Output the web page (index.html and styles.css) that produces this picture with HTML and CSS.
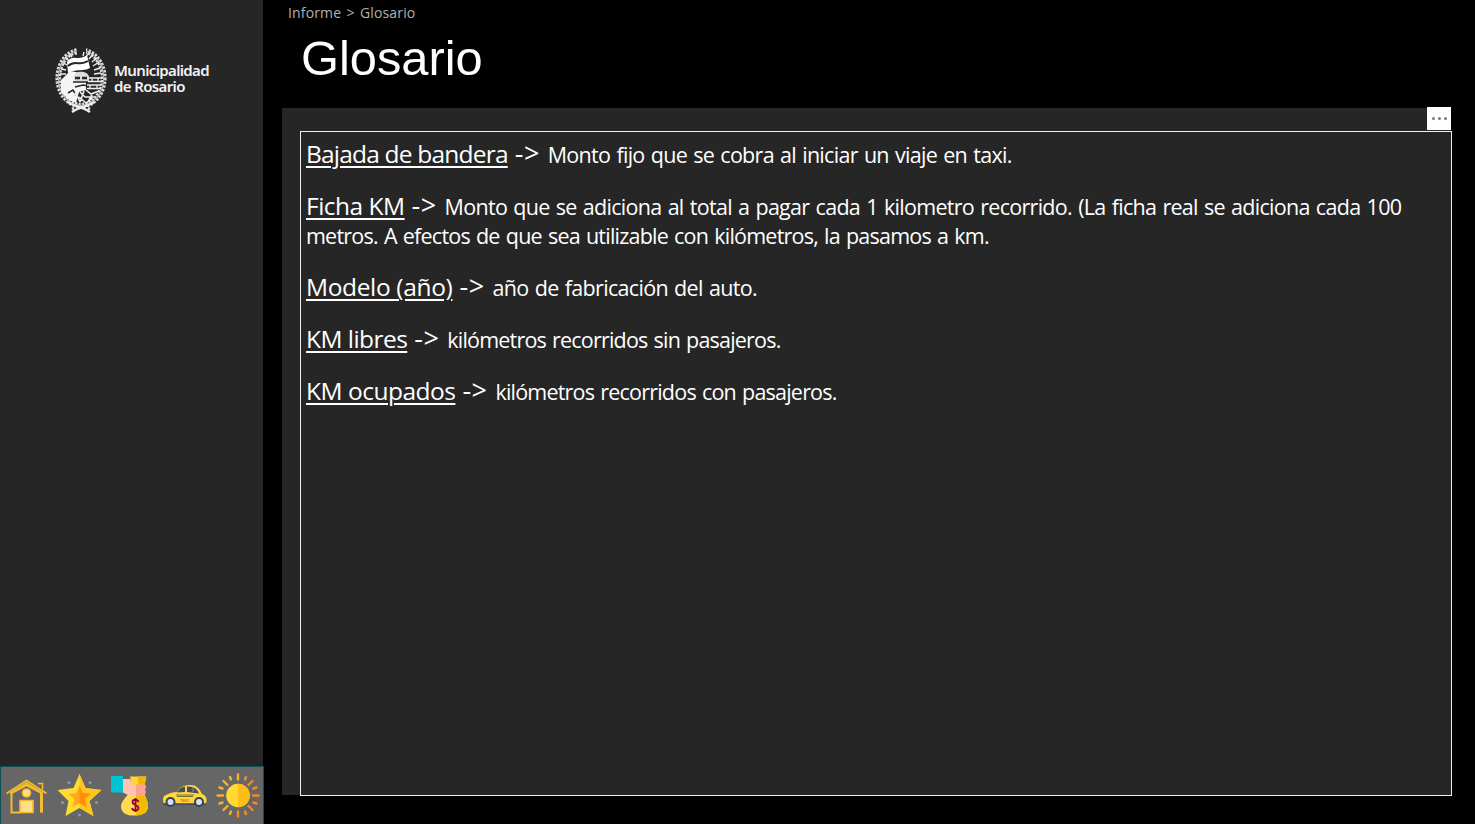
FILE: index.html
```
<!DOCTYPE html>
<html lang="es">
<head>
<meta charset="utf-8">
<title>Glosario</title>
<link rel="stylesheet" href="styles.css">
</head>
<body>
<div class="page">
  <aside class="sidebar">
    <div class="brand">
      <svg class="crest" viewBox="0 0 52 68" fill="none" stroke="#eee">
        <ellipse cx="26" cy="31" rx="24.300" ry="29" stroke="#ddd" stroke-width="2.600" stroke-dasharray="2.400 1.300"/>
        <ellipse cx="26" cy="31" rx="21" ry="26" stroke="#ddd" stroke-width="2.400" stroke-dasharray="2.400 1.100" stroke-dashoffset="1.500"/>
        <ellipse cx="26" cy="31" rx="22.700" ry="27.500" stroke="#bbb" stroke-width="1.200"/>
        <path d="M22 0h9v7h-9z" fill="#262626" stroke="none"/>
        <path d="M21 8v-2M28 9l1-4M31 10l3-5M34 12l4-5M37 15l5-4M38 19l6-4M39 23l6-2M39 27l7-1M14 14l-4-4M17 10l-2-3M12 18l-5-3M11 23l-5-1M11 27H5" stroke-width="1.400"/>
        <path d="M12 15c6-9 11 0 20-7l3 13c-8 4-11 0-22 5z" fill="#fff" stroke="none"/>
        <path d="M13 19c8-7 11 1 20-5" stroke="#262626" stroke-width="2"/>
        <path d="M15 24 6 33v12l8 8 7 3 3-11 7-2V29l-5-3z" fill="#f5f5f5" stroke="none"/>
        <path d="M19 30c0-7 14-7 15 0v5H19z" fill="#ddd" stroke="none"/>
        <path d="M20 31h5m2 0h5" stroke="#262626" stroke-width="2.400"/>
        <path d="M18 35h15M20 40l8-2 5 1M13 46l5-3 3 5" stroke="#262626" stroke-width="1.500"/>
        <path d="M33 31h14M33 34.500h14M32 38h14M32 41.500h14M37 31v4m6-4v4m-8 3v3m7-3v3" stroke-width="1.300"/>
        <path d="M31 43l5 4 8-3M25 45l5 5 9 0M24 50l7 6 6-5M15 52l6-6 4 9M29 44l-4 11M38 46l-5 9" stroke-width="1.600"/>
        <path d="M13 55c4 4 14 4 22 10M39 55c-4 4-14 4-22 10M19 61l-2 1m16-1 2 1" stroke-width="2.400"/>
      </svg>
      <div class="brand-name"><span>Municipalidad</span><span>de Rosario</span></div>
    </div>
    <nav class="toolbar">
      <svg class="icon" viewBox="0 0 44 48" fill="none" stroke="#f4bc2e" stroke-width="1.600">
        <path d="M15 41.500H6.500V22L21.500 14 36.500 22V41.500" stroke-width="2"/>
        <path d="M36.500 22v19.500" stroke-width="3"/>
        <path d="M1.500 22.500 21.500 9.500l20 13M5 22.500l16.500-10.500L38 22.500M33 12.500h4.500v6" stroke-width="1.500"/>
        <circle cx="21.500" cy="22" r="4" fill="#fce08a"/>
        <path d="M15 29.500h13v12H15z" fill="#fce08a"/>
      </svg>
      <svg class="icon" viewBox="0 0 44 48">
        <path d="m21.500 3 6 14 16 2-12 11 4 15-14-8-14 8 3-15L-.5 19l16-2z" fill="#ffdc32"/>
        <path d="m21.500 3 6 14 16 2-12 11 4 15-14-8z" fill="#ffc51f"/>
        <path d="m21.500 15 3 7 8 1-6 5 2 8-7-4-7 4 2-8-6-5 8-1z" fill="#ffa51e"/>
        <path d="m21.500 15 3 7 8 1-6 5 2 8-7-4z" fill="#ff8c0b"/>
        <g fill="#8b8fdd"><circle cx="11" cy="11.500" r="1.500"/><circle cx="32" cy="11.500" r="1.500"/><circle cx="4.500" cy="31.500" r="1.500"/><circle cx="38.500" cy="31.500" r="1.500"/><circle cx="21.500" cy="44" r="1.500"/></g>
      </svg>
      <svg class="icon" viewBox="0 0 44 48">
        <path d="M20 5.500h16c1 0-1 7-2 10l-12 2z" fill="#ffd33b"/><path d="M28 5.500h8c1 0-2 9-2 11h-6z" fill="#f0b900"/>
        <path d="M21 19h11c5 9 6 12 6 16 0 7-5 9-12 9.500s-15-1-15-9.500c0-5 6-9 10-16z" fill="#ffdc4f"/>
        <path d="M26 19h6c5 9 6 12 6 16 0 7-5 9-12 9.500z" fill="#f0bd00"/>
        <path d="M12 8h8l2 6h13v10H18l-6-3z" fill="#ffc2b3"/><path d="M26 13.500h9q2 2 0 5 2 3-1 6h-8z" fill="#ffa294"/>
        <path d="M1 5h12v16.500H1z" fill="#00c3d4"/>
        <path d="M25.500 27v14M28.500 31c-1-3-6-3-6 0 0 3.500 6 2.500 6 6 0 3.500-6 3-6.500 0" fill="none" stroke="#970044" stroke-width="1.800"/>
      </svg>
      <svg class="icon" viewBox="0 0 44 48">
        <path d="M1 25q7-4 13-4c3-5 6-7 14-7q7 0 11 9c5 2 5 5 4 10H1q-2-5 0-8z" fill="#ffd83b"/>
        <path d="M14 21.500q3-6 8-6v5.500zM24 15.500q9-1 12 7l-12-1.500z" fill="#484f5d"/>
        <path d="M30 16v5" stroke="#8b9097"/><path d="M13 24h18m-17 1.500h16" stroke="#594e37" stroke-width=".8"/>
        <path d="M0 33h4M12 33h20M40 33h3" stroke="#3d4656" stroke-width="1.500"/>
        <g fill="#d5e3ec" stroke="#364254" stroke-width="2"><circle cx="7.500" cy="31" r="4"/><circle cx="36" cy="31" r="4"/></g>
        <text class="taxi-label" x="17" y="30.500">TAXI</text>
      </svg>
      <svg class="icon" viewBox="0 0 44 48">
        <g stroke-width="2.400" stroke-linecap="round" stroke="#f6b32a"><path d="M22 3.500v5M1.500 24.500h5.500M7.500 10l4 4M7.500 39l4-4M14 6l1 2.500M3.500 16.500l3 1M3.500 32.500l3-1M14 43l1-2.500"/><path d="M22 40.500v5M37 24.500h5.500M36.500 10l-4 4M36.500 39l-4-4M30 6l-1 2.500M40.500 16.500l-3 1M40.500 32.500l-3-1M30 43l-1-2.500" stroke="#f28c22"/></g>
        <circle cx="22" cy="24.500" r="11.800" fill="#ffd92f"/><path d="M22 12.700a11.800 11.800 0 0 1 0 23.600z" fill="#ffbd17"/>
      </svg>
    </nav>
  </aside>
  <main class="main">
    <div class="breadcrumb">Informe &gt; Glosario</div>
    <h1 class="title">Glosario</h1>
    <section class="panel">
      <div class="panel-head"><button class="more" aria-label="Más opciones"><i></i><i></i><i></i></button></div>
      <div class="glossary">
        <p><span class="term t1">Bajada de bandera</span><span class="arrow">-&gt;</span><span class="def d1">Monto fijo que se cobra al iniciar un viaje en taxi.</span></p>
        <p><span class="term t2">Ficha KM</span><span class="arrow">-&gt;</span><span class="def d2">Monto que se adiciona al total a pagar cada 1 kilometro recorrido. (La ficha real se adiciona cada 100</span><br><span class="def d3">metros. A efectos de que sea utilizable con kilómetros, la pasamos a km.</span></p>
        <p><span class="term t3">Modelo (año)</span><span class="arrow">-&gt;</span><span class="def d4">año de fabricación del auto.</span></p>
        <p><span class="term t4">KM libres</span><span class="arrow">-&gt;</span><span class="def d5">kilómetros recorridos sin pasajeros.</span></p>
        <p><span class="term t5">KM ocupados</span><span class="arrow">-&gt;</span><span class="def d6">kilómetros recorridos con pasajeros.</span></p>
      </div>
    </section>
  </main>
</div>
</body>
</html>
```
FILE: styles.css
```
* { box-sizing: border-box; }
body { margin: 0; background: #000; color: #fff; font-family: "Open Sans", "Noto Sans", sans-serif; }
.page { display: flex; width: 1475px; height: 824px; overflow: hidden; }
.sidebar { width: 264px; display: flex; flex-direction: column; justify-content: space-between; background: linear-gradient(90deg, #262626 263px, #000 263px); }
.brand { display: flex; padding: 47px 0 0 55px; }
.crest { width: 52px; height: 68px; }
.brand-name { display: flex; flex-direction: column; margin: 15px 0 0 7px; font: 600 15px/16px "Noto Sans", sans-serif; letter-spacing: -.64px; white-space: nowrap; color: #f2f2f2; }
.brand-name span { height: 16px; }
.toolbar { height: 58px; display: flex; gap: 8.700px; padding: 4px 0 0 4px; background: #666; border: 1px solid #0d5159; border-bottom: 0; }
.icon { width: 44px; height: 48px; flex: none; overflow: visible; }
.taxi-label { font: bold 4px "Liberation Sans", sans-serif; fill: #f05b32; }
.main { flex: 1; padding-left: 18px; }
.breadcrumb { height: 26px; padding-left: 6px; font-size: 14px; line-height: 26px; color: #b3b0ad; letter-spacing: .15px; word-spacing: 1.500px; }
.title { margin: 0; height: 81px; padding: 4px 0 0 19px; font: 400 48.800px/56px "Liberation Sans", sans-serif; }
.panel { width: 1170px; height: 689px; background: linear-gradient(#262626, #262626) 0 1px / 1169px 687px no-repeat; }
.panel-head { height: 24px; display: flex; justify-content: flex-end; padding-right: 1px; }
.more { width: 24px; height: 23px; display: flex; align-items: center; justify-content: center; gap: 3px; padding: 0; border: 0; background: #fff; }
.more i { width: 3px; height: 3px; border-radius: 50%; background: #777; }
.glossary { height: 665px; margin-left: 18px; padding: 7px 5px; border: 1px solid #eee; }
.glossary p { margin: 0 0 23px; height: 29px; line-height: 29px; font-size: 21.500px; white-space: nowrap; }
.glossary p:nth-child(2) { height: 58px; }
.term, .def, .arrow { display: inline-block; height: 29px; vertical-align: baseline; }
.term { font-size: 24.500px; text-decoration: underline; text-decoration-thickness: 2px; text-underline-offset: 3px; }
.arrow { width: 40px; height: 24px; padding-left: 7px; font-size: 27px; line-height: 24px; letter-spacing: .5px; }
.def { word-spacing: 1.300px; }
.t1 { letter-spacing: -.8px; }
.t2 { letter-spacing: -.5px; }
.t3 { letter-spacing: -.35px; }
.t4 { letter-spacing: -.55px; }
.t5 { letter-spacing: -.5px; }
.d1 { letter-spacing: -.71px; }
.d2 { letter-spacing: -.71px; }
.d3 { letter-spacing: -.78px; }
.d4 { letter-spacing: -.68px; }
.d5 { letter-spacing: -.8px; }
.d6 { letter-spacing: -.79px; }
```
